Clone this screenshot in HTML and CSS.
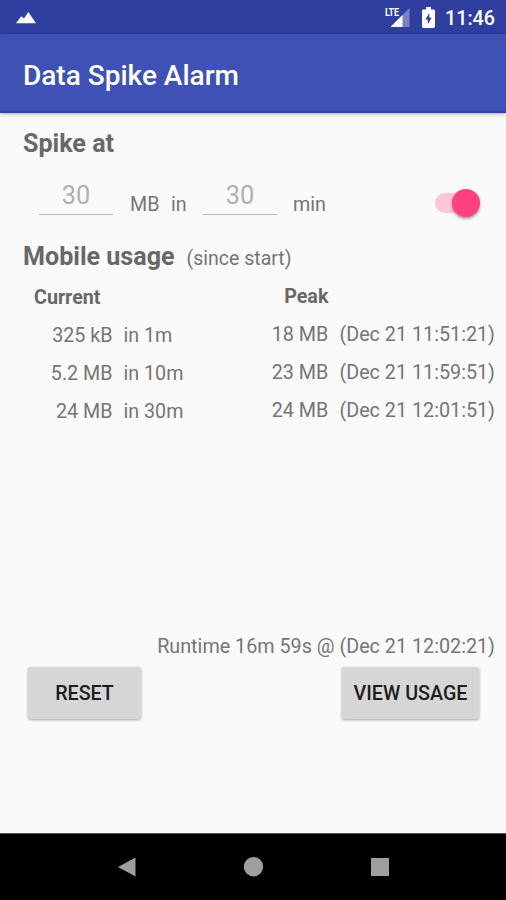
FILE: index.html
```html
<!DOCTYPE html>
<html lang="en">
<head>
<meta charset="utf-8">
<title>Data Spike Alarm</title>
<link rel="stylesheet" href="styles.css">
</head>
<body>
<div class="status">
  <svg class="peaks" width="20" height="12" viewBox="0 0 20 12"><path d="M0 11.300 5.300 4.300 8 6.500 12.300 0 20 11.300z" fill="#fff"/></svg>
  <div class="signal">
    <span class="lte">LTE</span>
    <svg width="20" height="20" viewBox="0 0 20 20"><path d="M19.500 0V19H.5z" fill="#7981c4"/><path d="M12.500 7V19H.5z" fill="#fff"/></svg>
  </div>
  <svg class="battery" width="13" height="22" viewBox="0 0 13 22"><path d="M4 0h5v2.500h2.600q1.400 0 1.400 1.400v15.700q0 1.400-1.400 1.400H1.400Q0 21 0 19.600V3.900q0-1.400 1.400-1.400H4z" fill="#fff"/><path d="M7.300 6 3.400 12.500h2.400v4.800l3.900-6.600H7.300z" fill="#303f9f"/></svg>
  <span class="clock">11:46</span>
</div>
<header class="appbar"><h1>Data Spike Alarm</h1></header>
<main>
  <h2>Spike at</h2>
  <div class="threshold">
    <div class="field">30</div>
    <span class="unit mb">MB</span>
    <span class="unit in">in</span>
    <div class="field">30</div>
    <span class="unit min">min</span>
    <div class="switch"><div class="thumb"></div></div>
  </div>
  <div class="heading"><h2>Mobile usage</h2><span>(since start)</span></div>
  <div class="tables">
    <section class="current">
      <h3>Current</h3>
      <div class="row"><span class="amount">325 kB</span><span>in 1m</span></div>
      <div class="row"><span class="amount">5.2 MB</span><span>in 10m</span></div>
      <div class="row"><span class="amount">24 MB</span><span>in 30m</span></div>
    </section>
    <section class="peak">
      <h3>Peak</h3>
      <div class="row"><span class="amount">18 MB</span><span>(Dec 21 11:51:21)</span></div>
      <div class="row"><span class="amount">23 MB</span><span>(Dec 21 11:59:51)</span></div>
      <div class="row"><span class="amount">24 MB</span><span>(Dec 21 12:01:51)</span></div>
    </section>
  </div>
  <div class="runtime">Runtime 16m 59s @ (Dec 21 12:02:21)</div>
  <div class="actions"><button class="reset">RESET</button><button class="view">VIEW USAGE</button></div>
</main>
<nav class="navbar">
  <svg width="18" height="20" viewBox="0 0 18 20"><path d="M0 10 17.500 .5V19.500z" fill="#9e9e9e"/></svg>
  <svg width="20" height="20" viewBox="0 0 20 20"><circle cx="9.500" cy="9.700" r="9.700" fill="#9e9e9e"/></svg>
  <svg width="18" height="18" viewBox="0 0 18 18"><path d="M0 0H18V18H0z" fill="#9e9e9e"/></svg>
</nav>
</body>
</html>
```
FILE: styles.css
```css
* { box-sizing: border-box; }
body {
  margin: 0;
  height: 900px;
  display: flex;
  flex-direction: column;
  background: #fafafa;
  color: #757575;
  font: 19.7px/24px Roboto, sans-serif;
  overflow: hidden;
  white-space: nowrap;
}
svg { display: block; flex: none; }
h1, h2, h3 { margin: 0; }
.status {
  height: 34px;
  display: flex;
  align-items: flex-start;
  padding: 0 11px 0 16px;
  background: #303f9f;
  color: #fff;
}
.peaks { margin-top: 12px; }
.signal { position: relative; margin: 8px 12px 0 auto; }
.lte {
  position: absolute;
  left: -5px;
  top: -1px;
  font-size: 11.5px;
  line-height: 11px;
  font-weight: 700;
  letter-spacing: -.3px;
  transform: scaleX(.78);
  transform-origin: left;
}
.battery { margin: 7px 10px 0 0; }
.clock { font-size: 19.7px; line-height: 38px; font-weight: 500; }
.appbar {
  height: 79px;
  padding: 0 23px;
  background: #3f51b5;
  border-bottom: 2px solid #3041a2;
  box-shadow: 0 1px 4px rgba(0, 0, 0, .3);
  color: #fff;
}
h1 { font-size: 28px; line-height: 83px; font-weight: 500; }
main { flex: 1; }
h2 { font-size: 25.1px; line-height: 30px; font-weight: 700; color: #686868; }
main > h2 { margin: 16px 0 0 23px; }
.threshold { display: flex; height: 57px; margin-top: 21px; padding-left: 39px; align-items: flex-start; }
.field {
  width: 74px;
  height: 35px;
  border-bottom: 1.5px solid #b5b5b5;
  font-size: 25.3px;
  line-height: 32px;
  text-align: center;
  color: #b0b0b0;
}
.unit { margin-top: 13px; }
.mb { margin-left: 17px; width: 41px; }
.in { width: 32px; }
.min { margin-left: 16px; }
.switch {
  width: 40px;
  height: 20px;
  margin: 13px 31.500px 0 auto;
  border-radius: 10px;
  background: #fdc5d8;
  display: flex;
  align-items: center;
  justify-content: flex-end;
}
.thumb {
  flex: none;
  width: 28px;
  height: 28px;
  margin-right: -5px;
  border-radius: 50%;
  background: #ff4081;
  box-shadow: 0 2px 3px rgba(0, 0, 0, .35);
}
.heading { display: flex; align-items: baseline; gap: 12px; margin: 5px 0 0 23px; height: 30px; font-size: 19.5px; }
.tables { display: flex; justify-content: space-between; height: 153px; margin-top: 11px; padding-right: 11px; }
h3 { font-size: 19.7px; line-height: 24px; font-weight: 700; color: #686868; margin-bottom: 7px; }
.current { margin-top: 3px; }
.current h3 { margin-left: 34px; }
.peak { margin-top: 2px; }
.peak h3 { width: 57px; text-align: right; }
.row { display: flex; gap: 11px; height: 38px; line-height: 38px; }
.current .amount { width: 112.500px; text-align: right; }
.peak { font-size: 19.75px; }
.peak .amount { width: 57px; text-align: right; }
.runtime { margin: 199px 11px 0 0; text-align: right; font-size: 19.75px; }
.actions { display: flex; justify-content: space-between; margin: 8px 27px 0 28px; }
button {
  height: 52px;
  padding: 0;
  border: 0;
  border-radius: 3px;
  background: #d6d6d6;
  box-shadow: 0 1px 3px rgba(0, 0, 0, .35);
  color: #1c1c1c;
  font: 500 19.7px/54px Roboto, sans-serif;
}
.reset { width: 113px; }
.view { width: 137px; }
.navbar {
  height: 67px;
  display: flex;
  justify-content: space-between;
  align-items: center;
  padding: 0 117px 0 118px;
  background: #000;
  border-top: 1px solid #555;
}
```
